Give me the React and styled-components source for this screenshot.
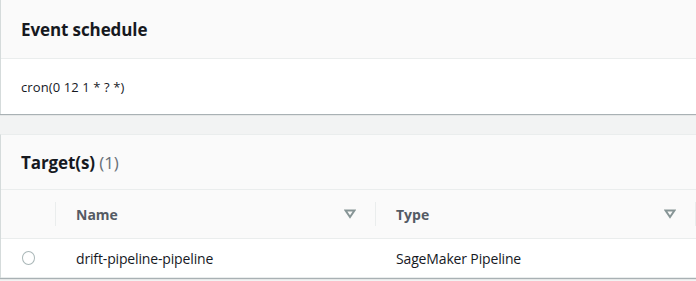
import React from 'react'
import styled, { createGlobalStyle } from 'styled-components'

const Global = createGlobalStyle`
  html, body { margin: 0; padding: 0; background: #f2f3f3; }
  body { font-family: 'Open Sans', 'Noto Sans', Arial, sans-serif; color: #16191f; overflow: hidden; }
`

const Page = styled.div`
  width: 696px;
  height: 281px;
  overflow: hidden;
  display: flex;
  flex-direction: column;
  gap: 20px;
`

const Card = styled.section`
  width: 720px;
  background: #ffffff;
  border-left: 1px solid #d5dbdb;
  box-shadow: 0 1px 1px 0 rgba(0, 28, 36, 0.3);
  ${p => p.$top ? '' : 'border-top: 1px solid #eaeded;'}
`

const CardHeader = styled.header`
  height: ${p => p.$h}px;
  background: #fafafa;
  border-bottom: 1px solid #eaeded;
  display: flex;
  align-items: center;
  padding-left: 20px;
  box-sizing: border-box;
`

const Title = styled.h2`
  margin: 0;
  font-size: 17px;
  font-weight: 700;
  color: #16191f;
  letter-spacing: -0.1px;
`

const Count = styled.span`
  font-weight: 400;
  color: #687078;
`

const CardBody = styled.div`
  height: 55px;
  display: flex;
  align-items: center;
  padding-left: 20px;
  font-size: 13px;
  letter-spacing: 0.1px;
`

const Table = styled.div`
  display: grid;
  grid-template-columns: 55px 320px 320px 25px;
`

const HeadCell = styled.div`
  height: 49px;
  background: #fafafa;
  border-bottom: 1px solid #eaeded;
  display: flex;
  align-items: center;
  position: relative;
  box-sizing: border-box;
  padding: 0 20px;
  justify-content: space-between;
  font-size: 14px;
  font-weight: 700;
  color: #545b64;
  &::after {
    content: '';
    display: ${p => p.$sep ? 'block' : 'none'};
    position: absolute;
    right: 0;
    top: 12px;
    height: 24px;
    border-right: 1px solid #eaeded;
  }
`

const Cell = styled.div`
  height: 39px;
  display: flex;
  align-items: center;
  padding: 0 ${p => p.$pad ?? 20}px;
  font-size: 14px;
  letter-spacing: -0.15px;
  color: #16191f;
  box-sizing: border-box;
  border-bottom: 1px solid #eaeded;
`

const Radio = styled.span`
  width: 12px;
  height: 12px;
  border: 1px solid #aab7b8;
  border-radius: 50%;
  background: #fff;
`

const SortIcon = () => (
  <svg width="12" height="10" viewBox="0 0 12 10">
    <path d="M1.5 1.5 L10.5 1.5 L6 8 Z" fill="none" stroke="#879596" strokeWidth="2" strokeLinejoin="miter" />
  </svg>
)

export default function App() {
  return (
    <Page>
      <Global />
      <Card $top>
        <CardHeader $h={59}>
          <Title>Event schedule</Title>
        </CardHeader>
        <CardBody>cron(0 12 1 * ? *)</CardBody>
      </Card>
      <Card>
        <CardHeader $h={55}>
          <Title>Target(s) <Count>(1)</Count></Title>
        </CardHeader>
        <Table>
          <HeadCell $sep />
          <HeadCell $sep>Name<SortIcon /></HeadCell>
          <HeadCell $sep>Type<SortIcon /></HeadCell>
          <HeadCell />
          <Cell $pad={21}><Radio /></Cell>
          <Cell>drift-pipeline-pipeline</Cell>
          <Cell>SageMaker Pipeline</Cell>
          <Cell />
        </Table>
      </Card>
    </Page>
  )
}
